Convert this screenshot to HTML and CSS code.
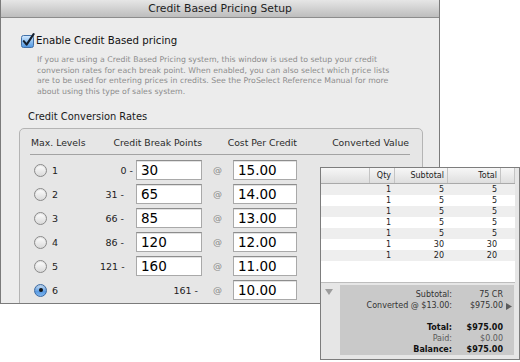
FILE: index.html
```html
<!DOCTYPE html>
<html lang="en">
<head>
  <meta charset="UTF-8">
  <title>Credit Based Pricing Setup</title>
  <link rel="stylesheet" href="styles.css">
</head>
<body>
  <div class="stage">
    <div class="window">
      <div class="titlebar">Credit Based Pricing Setup</div>
      <div class="content">
        <div class="enable">
          <svg class="checkbox" width="15" height="15" viewBox="0 0 15 15">
            <defs>
              <linearGradient id="aqua" x1="0" y1="0" x2="0" y2="1">
                <stop offset="0" stop-color="#d6ebff"/>
                <stop offset="0.5" stop-color="#8fc0f0"/>
                <stop offset="1" stop-color="#4f95e0"/>
              </linearGradient>
            </defs>
            <rect x="1.5" y="2.5" width="12" height="12" rx="2" fill="url(#aqua)" stroke="#4170a8"/>
            <path d="M3.8 8.2 L6.6 11.6 L13.6 1.2" fill="none" stroke="#15202e" stroke-width="2.1" stroke-linecap="round" stroke-linejoin="round"/>
          </svg>
          <span>Enable Credit Based pricing</span>
        </div>

        <p class="desc">If you are using a Credit Based Pricing system, this window is used to setup your credit<br>conversion rates for each break point. When enabled, you can also select which price lists<br>are to be used for entering prices in credits. See the ProSelect Reference Manual for more<br>about using this type of sales system.</p>

        <div class="group-label">Credit Conversion Rates</div>
        <div class="group">
          <div class="grid head">
            <div class="h-levels">Max. Levels</div>
            <div class="h-break">Credit Break Points</div>
            <div class="h-cost">Cost Per Credit</div>
            <div class="h-value">Converted Value</div>
          </div>

          <div class="grid row">
            <div class="level"><span class="radio"></span>1</div>
            <div class="from first">0 -</div>
            <input class="field" type="text" value="30">
            <div class="at">@</div>
            <input class="field" type="text" value="15.00">
          </div>
          <div class="grid row">
            <div class="level"><span class="radio"></span>2</div>
            <div class="from">31 -</div>
            <input class="field" type="text" value="65">
            <div class="at">@</div>
            <input class="field" type="text" value="14.00">
          </div>
          <div class="grid row">
            <div class="level"><span class="radio"></span>3</div>
            <div class="from">66 -</div>
            <input class="field" type="text" value="85">
            <div class="at">@</div>
            <input class="field" type="text" value="13.00">
          </div>
          <div class="grid row">
            <div class="level"><span class="radio"></span>4</div>
            <div class="from">86 -</div>
            <input class="field" type="text" value="120">
            <div class="at">@</div>
            <input class="field" type="text" value="12.00">
          </div>
          <div class="grid row">
            <div class="level"><span class="radio"></span>5</div>
            <div class="from">121 -</div>
            <input class="field" type="text" value="160">
            <div class="at">@</div>
            <input class="field" type="text" value="11.00">
          </div>
          <div class="grid row">
            <div class="level"><span class="radio on"></span>6</div>
            <div class="from last">161 -</div>
            <div class="at">@</div>
            <input class="field" type="text" value="10.00">
          </div>
        </div>
      </div>
    </div>

    <!-- order panel lying over the window -->
    <div class="panel">
      <div class="items">
        <div class="items-row items-head">
          <div></div><div>Qty</div><div>Subtotal</div><div>Total</div><div></div>
        </div>
        <div class="items-row"><div></div><div>1</div><div>5</div><div>5</div><div></div></div>
        <div class="items-row"><div></div><div>1</div><div>5</div><div>5</div><div></div></div>
        <div class="items-row"><div></div><div>1</div><div>5</div><div>5</div><div></div></div>
        <div class="items-row"><div></div><div>1</div><div>5</div><div>5</div><div></div></div>
        <div class="items-row"><div></div><div>1</div><div>5</div><div>5</div><div></div></div>
        <div class="items-row"><div></div><div>1</div><div>30</div><div>30</div><div></div></div>
        <div class="items-row"><div></div><div>1</div><div>20</div><div>20</div><div></div></div>
      </div>

      <div class="summary-area">
        <span class="disclosure"></span>
        <div class="summary">
          <div class="label">Subtotal:</div><div class="value">75 CR</div><div></div>
          <div class="label">Converted @ $13.00:</div><div class="value">$975.00</div>
          <div class="arrow"><svg width="6" height="7" viewBox="0 0 6 7"><path d="M0 0 L6 3.5 L0 7 Z" fill="#5c5c5c"/></svg></div>
          <div></div><div></div><div></div>
          <div class="label strong">Total:</div><div class="value strong">$975.00</div><div></div>
          <div class="label light">Paid:</div><div class="value light">$0.00</div><div></div>
          <div class="label strong">Balance:</div><div class="value strong">$975.00</div><div></div>
        </div>
      </div>
    </div>
  </div>
</body>
</html>
```

FILE: styles.css
```css
body {
  margin: 0;
  background: #fff;
  font-family: "DejaVu Sans", sans-serif;
  color: #222;
}

.stage {
  position: relative;
  width: 520px;
  height: 362px;
}

/* main dialog */
.window {
  width: 438px;
  height: 303px;
  border: 1px solid #7b7b7b;
  border-top: none;
  background: #ececec;
  overflow: hidden;
}

.titlebar {
  height: 17px;
  line-height: 17px;
  border-bottom: 1px solid #8c8c8c;
  background: linear-gradient(#e6e6e6, #bdbdbd);
  text-align: center;
  font-size: 10.8px;
  color: #1e1e1e;
}

.enable {
  display: flex;
  align-items: center;
  height: 16px;
  margin: 14px 0 0 19px;
  font-size: 10.2px;
  color: #111;
}

.checkbox {
  margin-right: 1px;
}

.desc {
  margin: 7px 0 0 36px;
  font-size: 7.8px;
  line-height: 10.5px;
  color: #8c8c8c;
  white-space: nowrap;
}

.group-label {
  margin: 14px 0 0 27px;
  font-size: 9.9px;
  line-height: 12px;
  color: #1a1a1a;
}

.group {
  width: 392px;
  height: 200px;
  margin: 5px 0 0 18px;
  padding-left: 10px;
  border: 1px solid #b4b4b4;
  border-radius: 5px;
  background: #e6e6e6;
}

.grid {
  display: grid;
  grid-template-columns: 70px 36px 66px 31px 64px 113px;
  width: 380px;
  white-space: nowrap;
}

.head {
  padding: 8px 0 5px;
  line-height: 12px;
  font-size: 9.3px;
  color: #2a2a2a;
  border-bottom: 1px solid #a3a3a3;
}

.h-levels {
  grid-column: 1;
  padding-left: 1px;
}

.h-break {
  grid-column: 2 / 4;
  text-align: right;
}

.h-cost {
  grid-column: 4 / 6;
  text-align: right;
}

.h-value {
  grid-column: 6;
  text-align: right;
  padding-right: 1px;
}

.row {
  height: 24px;
  align-items: center;
  font-size: 9.5px;
}

.head + .row {
  margin-top: 3px;
}

.level {
  display: flex;
  align-items: center;
  padding-left: 4px;
}

.radio {
  width: 11px;
  height: 11px;
  margin-right: 5px;
  border: 1px solid #8a8a8a;
  border-radius: 50%;
  background: linear-gradient(#ffffff, #d9d9d9);
  box-shadow: inset 0 1px 1px rgba(0, 0, 0, 0.12);
}

.radio.on {
  position: relative;
  border-color: #3b6aa3;
  background: linear-gradient(#cfe5fb, #5b9be2 60%, #7fb6ef);
}

.radio.on::after {
  content: "";
  position: absolute;
  left: 3.5px;
  top: 3.5px;
  width: 4px;
  height: 4px;
  border-radius: 50%;
  background: #111;
}

.from {
  text-align: right;
  padding-right: 12px;
}

.from.first {
  padding-right: 3px;
}

.from.last {
  grid-column: 2 / 4;
  padding-right: 4px;
}

.at {
  text-align: center;
  color: #8a8a8a;
  font-size: 9px;
}

.field {
  box-sizing: border-box;
  width: 100%;
  height: 20px;
  margin: 0;
  padding: 0 0 0 4px;
  border: 1px solid #a9a9a9;
  border-top-color: #8d8d8d;
  background: #fff;
  font-family: "DejaVu Sans", sans-serif;
  font-size: 13.5px;
  color: #000;
  box-shadow: inset 0 1px 0 #e2e2e2;
}

/* order panel */
.panel {
  position: absolute;
  left: 320px;
  top: 167px;
  width: 198px;
  height: 191px;
  border: 1px solid #7d7d7d;
  background: #e6e6e6;
}

.items {
  width: 194px;
  height: 114px;
  border-bottom: 1px solid #bdbdbd;
  background: #fff;
  font-size: 8px;
  color: #222;
}

.items-row {
  display: grid;
  grid-template-columns: 49px 25px 53px 53px 14px;
  height: 11px;
  line-height: 11px;
}

.items-row div {
  text-align: right;
  padding-right: 4px;
}

.items-row:nth-child(even) {
  background: #eeeeee;
}

.items-head {
  height: 15px;
  line-height: 15px;
  border-bottom: 1px solid #a9a9a9;
  background: linear-gradient(#f7f7f7, #dedede);
}

.items-head div {
  border-right: 1px solid #c4c4c4;
  padding-right: 3px;
}

.summary-area {
  display: flex;
  padding: 2px 0 0 4px;
}

.disclosure {
  width: 0;
  height: 0;
  margin: 4px 7px 0 0;
  border-left: 4px solid transparent;
  border-right: 4px solid transparent;
  border-top: 6px solid #9d9d9d;
}

.summary {
  display: grid;
  grid-template-columns: 112px 51px 11px;
  grid-auto-rows: 11px;
  width: 174px;
  height: 66px;
  padding-top: 4px;
  background: #c9c9c9;
  font-size: 8px;
  line-height: 11px;
  color: #333;
}

.label,
.value {
  text-align: right;
}

.arrow {
  padding-left: 3px;
  padding-top: 2px;
}

.strong {
  font-weight: bold;
  color: #111;
}

.light {
  color: #5a5a5a;
}
```
